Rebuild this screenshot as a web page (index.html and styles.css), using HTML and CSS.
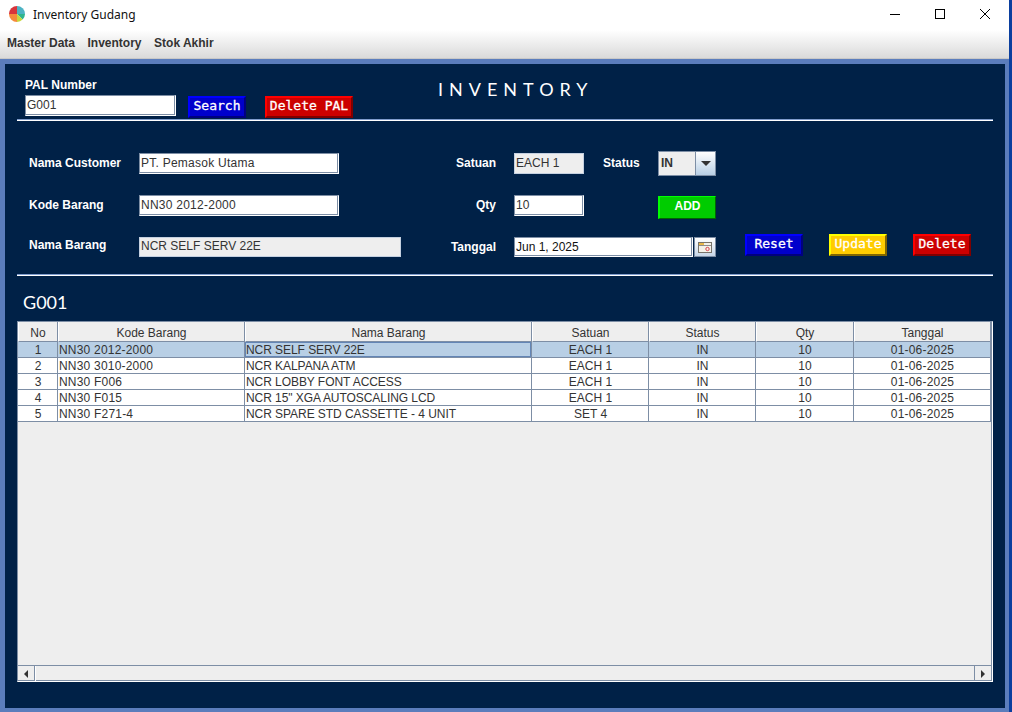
FILE: index.html
```html
<!DOCTYPE html>
<html lang="en">
<head>
    <meta charset="UTF-8">
    <meta name="viewport" content="width=device-width, initial-scale=1.0">
    <title>Inventory Gudang</title>
    <link rel="stylesheet" href="styles.css">
</head>
<body>
    <div class="window">
        <div class="title-bar">
            <svg class="app-icon" viewBox="0 0 16 16" width="16" height="16">
                <path d="M8 8 L8 0 A8 8 0 0 1 16 8 Z" fill="#4db3c4"/>
                <path d="M8 8 L16 8 A8 8 0 0 1 13.6 13.6 Z" fill="#2fb58f"/>
                <path d="M8 8 L13.6 13.6 A8 8 0 0 1 8 16 Z" fill="#c6d63c"/>
                <path d="M8 8 L8 16 A8 8 0 0 1 0 8 Z" fill="#f58a3c"/>
                <path d="M8 8 L0 8 A8 8 0 0 1 8 0 Z" fill="#d8343c"/>
            </svg>
            <span class="app-name">Inventory Gudang</span>
            <div class="window-buttons">
                <svg viewBox="0 0 12 12" width="12" height="12"><path d="M1 6.5 H11" stroke="#000" fill="none"/></svg>
                <svg viewBox="0 0 12 12" width="12" height="12"><rect x="1.5" y="1.5" width="9" height="9" stroke="#000" fill="none"/></svg>
                <svg viewBox="0 0 12 12" width="12" height="12"><path d="M1 1 L11 11 M11 1 L1 11" stroke="#000" fill="none"/></svg>
            </div>
        </div>
        <div class="menu-bar">
            <span>Master Data</span>
            <span>Inventory</span>
            <span>Stok Akhir</span>
        </div>
        <div class="frame">
            <div class="panel">
                <div class="search-row">
                    <div class="pal-group">
                        <label class="pal-label" for="pal">PAL Number</label>
                        <input class="field" id="pal" type="text" value="G001">
                    </div>
                    <button class="btn btn-blue btn-search">Search</button>
                    <button class="btn btn-red btn-delete-pal">Delete PAL</button>
                    <h1 class="page-title">INVENTORY</h1>
                </div>
                <div class="divider"></div>

                <div class="form-grid">
                    <label class="lbl lbl-left">Nama Customer</label>
                    <input class="field field-wide" type="text" value="PT. Pemasok Utama">
                    <label class="lbl lbl-right">Satuan</label>
                    <input class="field field-off satuan" type="text" value="EACH 1" readonly>
                    <label class="lbl status-lbl">Status</label>
                    <div class="combo">
                        <span class="combo-value">IN</span>
                        <span class="combo-arrow"><i></i></span>
                    </div>

                    <label class="lbl lbl-left">Kode Barang</label>
                    <input class="field field-wide" type="text" value="NN30 2012-2000">
                    <label class="lbl lbl-right">Qty</label>
                    <input class="field qty" type="text" value="10">
                    <button class="btn-add">ADD</button>

                    <label class="lbl lbl-left lbl-up">Nama Barang</label>
                    <input class="field field-off field-long" type="text" value="NCR SELF SERV 22E" readonly>
                    <label class="lbl lbl-right">Tanggal</label>
                    <div class="date-picker">
                        <input class="field" type="text" value="Jun 1, 2025">
                        <span class="date-btn">
                            <svg viewBox="0 0 14 11" width="14" height="11">
                                <rect x="0.5" y="0.5" width="13" height="10" fill="#f4f1e8" stroke="#77736a"/>
                                <rect x="1" y="1" width="5" height="2" fill="#e8b84a"/>
                                <rect x="1" y="3" width="12" height="1" fill="#8c8c8c"/>
                                <circle cx="9.5" cy="7" r="1.7" fill="none" stroke="#d9434e"/>
                            </svg>
                        </span>
                    </div>
                    <div class="actions">
                        <button class="btn btn-blue">Reset</button>
                        <button class="btn btn-yellow">Update</button>
                        <button class="btn btn-red">Delete</button>
                    </div>
                </div>
                <div class="divider"></div>

                <h2 class="pal-title">G001</h2>

                <div class="table-box">
                    <div class="table-area">
                        <table class="data-table">
                            <colgroup>
                                <col class="c-no"><col class="c-kode"><col class="c-nama"><col class="c-satuan">
                                <col class="c-status"><col class="c-qty"><col class="c-tgl">
                            </colgroup>
                            <thead>
                                <tr>
                                    <th>No</th><th>Kode Barang</th><th>Nama Barang</th><th>Satuan</th>
                                    <th>Status</th><th>Qty</th><th>Tanggal</th>
                                </tr>
                            </thead>
                            <tbody>
                                <tr class="selected">
                                    <td class="mid">1</td><td>NN30 2012-2000</td><td class="focused">NCR SELF SERV 22E</td><td class="mid">EACH 1</td>
                                    <td class="mid">IN</td><td class="mid">10</td><td class="mid">01-06-2025</td>
                                </tr>
                                <tr>
                                    <td class="mid">2</td><td>NN30 3010-2000</td><td>NCR KALPANA ATM</td><td class="mid">EACH 1</td>
                                    <td class="mid">IN</td><td class="mid">10</td><td class="mid">01-06-2025</td>
                                </tr>
                                <tr>
                                    <td class="mid">3</td><td>NN30 F006</td><td>NCR LOBBY FONT ACCESS</td><td class="mid">EACH 1</td>
                                    <td class="mid">IN</td><td class="mid">10</td><td class="mid">01-06-2025</td>
                                </tr>
                                <tr>
                                    <td class="mid">4</td><td>NN30 F015</td><td>NCR 15" XGA AUTOSCALING LCD</td><td class="mid">EACH 1</td>
                                    <td class="mid">IN</td><td class="mid">10</td><td class="mid">01-06-2025</td>
                                </tr>
                                <tr>
                                    <td class="mid">5</td><td>NN30 F271-4</td><td>NCR SPARE STD CASSETTE - 4 UNIT</td><td class="mid">SET 4</td>
                                    <td class="mid">IN</td><td class="mid">10</td><td class="mid">01-06-2025</td>
                                </tr>
                            </tbody>
                        </table>
                    </div>
                    <div class="scrollbar">
                        <span class="sb-btn"><i class="arrow-left"></i></span>
                        <span class="sb-track"></span>
                        <span class="sb-btn sb-end"><i class="arrow-right"></i></span>
                    </div>
                </div>
            </div>
        </div>
    </div>
</body>
</html>
```

FILE: styles.css
```css
html, body {
    margin: 0;
    padding: 0;
    height: 712px;
    overflow: hidden;
    background-color: #0b3f9e;
    font-family: "Liberation Sans", Arial, sans-serif;
    font-size: 12px;
    color: #333;
}
.window {
    width: 1009px;
    height: 712px;
    display: flex;
    flex-direction: column;
}
.title-bar {
    height: 30px;
    background: #fff;
    display: flex;
    align-items: center;
    padding-left: 9px;
    flex: none;
}
.app-icon {
    margin-right: 8px;
    margin-top: -2px;
}
.app-name {
    font-family: "Noto Sans", sans-serif;
    font-size: 12px;
    color: #111;
    margin-top: -1px;
}
.window-buttons {
    margin-left: auto;
    display: flex;
    gap: 33px;
    padding-right: 18px;
    margin-top: -2px;
}
.menu-bar {
    height: 29px;
    flex: none;
    box-sizing: border-box;
    background: linear-gradient(#ffffff, #dadada);
    border-bottom: 1px solid #c8c8c8;
    display: flex;
    align-items: center;
    gap: 12.5px;
    padding: 0 0 3px 7px;
    font-weight: bold;
    color: #333;
}
.frame {
    flex: 1;
    background: #5b7dbc;
    padding: 5px 4px 4px 5px;
    min-height: 0;
}
.panel {
    height: 100%;
    box-sizing: border-box;
    background: #002147;
    padding: 0 12px;
    display: flex;
    flex-direction: column;
}
.search-row {
    height: 55px;
    display: flex;
    align-items: flex-start;
    padding-left: 8px;
    flex: none;
}
.pal-group {
    display: flex;
    flex-direction: column;
    width: 151px;
    margin-top: 15px;
}
.pal-label {
    color: #fff;
    font-weight: bold;
    line-height: 12px;
    height: 16px;
}
.btn {
    font-family: "DejaVu Sans Mono", monospace;
    font-weight: normal;
    -webkit-text-stroke: 0.3px #fff;
    font-size: 13px;
    color: #fff;
    height: 22px;
    width: 58px;
    padding: 0 0 3px;
    border: 2px solid;
    box-sizing: border-box;
    line-height: 14px;
}
.btn-blue {
    background: #0000cc;
    border-color: #0000ff #000080 #000080 #0000ff;
}
.btn-red {
    background: #cc0000;
    border-color: #ff0000 #800000 #800000 #ff0000;
}
.btn-yellow {
    background: #ffcc00;
    border-color: #ffff00 #806600 #806600 #ffff00;
}
.btn-search {
    margin: 32px 0 0 12px;
}
.btn-delete-pal {
    margin: 32px 0 0 19px;
    width: 88px;
}
.page-title {
    margin: 15px 0 0 85px;
    color: #fff;
    font-family: "Lato", sans-serif;
    font-weight: normal;
    font-size: 18px;
    line-height: 20px;
    letter-spacing: 6px;
}
.divider {
    height: 1px;
    flex: none;
    background: #fff;
    border-top: 1px solid #7f9ccd;
}
.field {
    box-sizing: border-box;
    height: 21px;
    width: 100%;
    padding: 0 0 2px 1px;
    border: 1px solid #fff;
    border-top-color: #7d8ea5;
    border-left-color: #7d8ea5;
    box-shadow: inset -1px -1px 0 #7d8ea5;
    border-radius: 0;
    outline: none;
    background: #fff;
    font-family: "Liberation Sans", Arial, sans-serif;
    font-size: 12px;
    color: #333;
}
.field-wide {
    width: 200px;
    letter-spacing: 0.25px;
}
.field-off {
    background: #eeeeee;
    border: 1px solid #c4d0e0;
    box-shadow: none;
}
.field-long {
    height: 20px;
}
.form-grid {
    flex: none;
    display: grid;
    grid-template-columns: 110px 262px 95px 18px 70px 74px 58px 1fr;
    grid-template-rows: 42px 42px 39px;
    align-items: start;
    padding: 30px 0 0 12px;
}
.lbl {
    color: #fff;
    font-weight: bold;
    line-height: 20px;
    margin-top: 2px;
}
.lbl-left {
    grid-column: 1;
}
.field-wide, .field-long {
    grid-column: 2;
}
.lbl-up {
    margin-top: 0;
}
.form-grid > .field, .date-picker {
    margin-top: 2px;
}
.lbl-right {
    text-align: right;
    grid-column: 3;
}
.satuan, .qty {
    grid-column: 5;
}
.status-lbl {
    padding-left: 19px;
    grid-column: 6;
}
.combo {
    grid-column: 7;
    height: 25px;
    box-sizing: border-box;
    border: 1px solid #7d8ea5;
    display: flex;
    background: #eeeeee;
}
.combo-value {
    flex: 1;
    font-weight: bold;
    line-height: 23px;
    padding-left: 2px;
    border-right: 1px solid #7d8ea5;
}
.combo-arrow {
    width: 19px;
    background: linear-gradient(#ffffff, #b8cfe5);
    display: flex;
    align-items: center;
    justify-content: center;
}
.combo-arrow i {
    border-left: 5px solid transparent;
    border-right: 5px solid transparent;
    border-top: 5px solid #333;
}
.btn-add {
    grid-column: 7;
    margin-top: 3px;
    height: 23px;
    box-sizing: border-box;
    padding: 0 0 4px;
    border: 1px solid #006600;
    border-top-color: #00ff00;
    border-left: 2px solid #00ff00;
    background: #00cc00;
    color: #fff;
    font-family: "Liberation Sans", Arial, sans-serif;
    font-weight: bold;
    font-size: 12px;
}
.date-picker {
    grid-column: 5 / 8;
    display: flex;
    height: 20px;
}
.date-picker .field {
    height: 20px;
    flex: 1;
    width: auto;
    padding-bottom: 1px;
    color: #111;
}
.date-btn {
    width: 22px;
    margin-left: 1px;
    box-sizing: border-box;
    flex: none;
    border: 1px solid #7d8ea5;
    background: linear-gradient(#ffffff, #c6d6e8);
    display: flex;
    align-items: center;
    justify-content: center;
}
.actions {
    grid-column: 8;
    display: flex;
    gap: 26px;
    margin: -1px 0 0 29px;
}
.pal-title {
    flex: none;
    height: 45px;
    margin: 0;
    padding-left: 6px;
    box-sizing: border-box;
    color: #fff;
    font-family: "Lato", sans-serif;
    font-weight: normal;
    font-size: 18px;
    line-height: 53px;
}
.table-box {
    flex: none;
    height: 361px;
    box-sizing: border-box;
    border: 1px solid #7d8ea5;
    border-right-color: #fff;
    border-bottom-color: #fff;
    box-shadow: inset -1px -1px 0 #7d8ea5;
    background: #eeeeee;
    display: flex;
    flex-direction: column;
}
.table-area {
    flex: 1;
    min-height: 0;
    overflow: hidden;
}
.data-table {
    table-layout: fixed;
    width: 973px;
    border-collapse: separate;
    border-spacing: 0;
    background: #fff;
}
.c-no { width: 40px; }
.c-kode { width: 187px; }
.c-nama { width: 287px; }
.c-satuan { width: 117px; }
.c-status { width: 107px; }
.c-qty { width: 98px; }
.c-tgl { width: 137px; }
.data-table th {
    height: 20px;
    padding: 2px 0 0;
    background: #eeeeee;
    font-weight: normal;
    border-left: 1px solid #fff;
    border-right: 1px solid #7d8ea5;
    border-bottom: 1px solid #7d8ea5;
    box-sizing: border-box;
}
.data-table td {
    height: 16px;
    padding: 1px 0 0 1px;
    box-sizing: border-box;
    line-height: 14px;
    border-right: 1px solid #7d8ea5;
    border-bottom: 1px solid #7d8ea5;
    white-space: nowrap;
    overflow: hidden;
}
.data-table td:nth-child(2) {
    letter-spacing: 0.2px;
}
.data-table td:nth-child(3) {
    letter-spacing: -0.06px;
}
.data-table td:nth-child(7) {
    letter-spacing: 0.2px;
}
.data-table .mid {
    text-align: center;
}
.selected td {
    background: #b8cfe5;
}
.data-table .focused {
    box-shadow: inset 0 0 0 1px #6385b5;
}
.scrollbar {
    flex: none;
    height: 16px;
    box-sizing: border-box;
    border-top: 1px solid #7d8ea5;
    display: flex;
    background: transparent;
}
.sb-btn {
    width: 16px;
    flex: none;
    display: flex;
    align-items: center;
    justify-content: center;
    border-right: 1px solid #7d8ea5;
}
.sb-end {
    border-right: 0;
    border-left: 1px solid #7d8ea5;
    margin-right: 1px;
}
.sb-track {
    flex: 1;
    border-left: 1px solid #fff;
}
.arrow-left, .arrow-right {
    border-top: 4px solid transparent;
    border-bottom: 4px solid transparent;
}
.arrow-left {
    border-right: 4px solid #333;
}
.arrow-right {
    border-left: 4px solid #333;
}
```
